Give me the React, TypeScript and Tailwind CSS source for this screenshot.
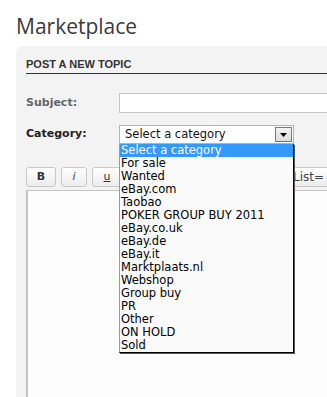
import React from "react";

const items = [
  "Select a category",
  "For sale",
  "Wanted",
  "eBay.com",
  "Taobao",
  "POKER GROUP BUY 2011",
  "eBay.co.uk",
  "eBay.de",
  "eBay.it",
  "Marktplaats.nl",
  "Webshop",
  "Group buy",
  "PR",
  "Other",
  "ON HOLD",
  "Sold",
];

const btn =
  "h-[20px] shrink-0 rounded-[3px] border border-[#c8c8c8] bg-gradient-to-b from-white to-[#ececec] text-[11px] text-[#333] flex items-center justify-center";

export default function App() {
  return (
    <div className="relative w-[327px] h-[397px] overflow-hidden bg-white">
      <div
        className="pl-4 pt-[11px] h-[46px] text-[21px] leading-[30px] text-[#3a3a3a]"
        style={{ fontFamily: '"Open Sans", sans-serif' }}
      >
        Marketplace
      </div>
      <div className="ml-4 w-[340px] h-[351px] rounded-tl-[7px] bg-[#f3f3f3] pl-[10px]">
        <div
          className="pt-[12px] pb-[2px] border-b border-[#333] text-[11px] leading-[13px] font-bold text-[#333]"
          style={{ fontFamily: '"Liberation Sans", Arial, sans-serif' }}
        >
          POST A NEW TOPIC
        </div>
        <div
          className="mt-[19px] flex items-center h-[20px]"
          style={{ fontFamily: '"DejaVu Sans", Verdana, sans-serif' }}
        >
          <div className="w-[93px] text-[11px] font-bold text-[#666]">Subject:</div>
          <div className="h-[20px] flex-1 border border-[#c4c4c4] bg-white" />
        </div>
        <div
          className="mt-[12px] flex items-center h-[19px]"
          style={{ fontFamily: '"DejaVu Sans", Verdana, sans-serif' }}
        >
          <div className="w-[93px] text-[11px] font-bold text-[#222]">Category:</div>
          <div className="h-[19px] w-[175px] border border-[#b4b4b4] bg-white flex items-center pl-[5px] pr-[1px]">
            <span className="flex-1 text-[11.5px] text-[#111]">Select a category</span>
            <span className="h-[15px] w-[17px] border border-[#777] bg-gradient-to-b from-[#f4f4f4] to-[#dcdcdc] flex items-center justify-center">
              <svg width="7" height="4" viewBox="0 0 7 4">
                <polygon points="0,0 7,0 3.5,4" fill="#000" />
              </svg>
            </span>
          </div>
        </div>
        <div
          className="mt-[23px] flex gap-[5px]"
          style={{ fontFamily: '"DejaVu Sans", Verdana, sans-serif' }}
        >
          <div className={`${btn} w-[30px] font-bold`}>B</div>
          <div className={`${btn} w-[26px] italic`}>i</div>
          <div className={`${btn} w-[30px] underline`}>u</div>
          <div className={`${btn} w-[50px]`} />
          <div className={`${btn} w-[45px]`} />
          <div className={`${btn} w-[45px]`} />
          <div className={`${btn} w-[50px] !justify-start pl-[10px] text-[12px] text-[#444]`}>List=</div>
        </div>
        <div className="mt-[3px] h-[230px] border-l-2 border-t border-[#c4c4c4] bg-[#fdfdfd]" />
      </div>

      <div
        className="absolute left-[119px] top-[144px] w-[175px] border-l border-[#9a9a9a] border-r border-b border-r-black border-b-black bg-[#fafafa] shadow-[1px_1px_0_#555]"
        style={{ fontFamily: '"DejaVu Sans", Verdana, sans-serif' }}
      >
        {items.map((it, i) => (
          <div
            key={it}
            className={`h-[13px] pl-[1px] text-[11.5px] leading-[13px] whitespace-nowrap ${
              i === 0 ? "bg-[#3399ff] text-white" : "text-black"
            }`}
          >
            {it}
          </div>
        ))}
      </div>
    </div>
  );
}
